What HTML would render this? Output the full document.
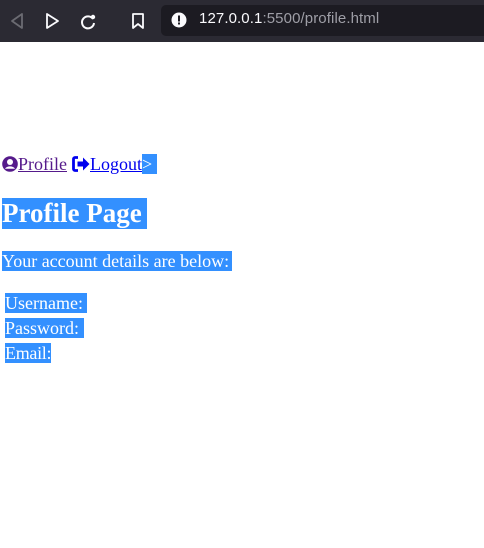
<!DOCTYPE html>
<html><head><meta charset="utf-8"><style>
html,body{margin:0;padding:0;background:#fff;width:484px;height:548px;overflow:hidden;position:relative;font-family:"Liberation Serif",serif}
.bar{position:absolute;left:0;top:0;width:484px;height:42px;background:#2b2a33}
.url{position:absolute;left:161px;top:5px;width:330px;height:31px;background:#1c1b22;border-radius:5px}
.urltxt{position:absolute;left:199px;top:10px;font:15px "Liberation Sans",sans-serif;color:#fbfbfe;letter-spacing:0.1px}
.urltxt span{color:#9e9ea6}
.sel{background:#3390ff;color:#fff}
.abs{position:absolute;white-space:nowrap}
a{color:#0000ee;text-decoration:underline}
</style></head><body>
<div class="bar"></div>
<svg class="abs" style="left:8px;top:11px" width="20" height="20" viewBox="0 0 20 20"><path d="M14 3v14L4 10z" fill="none" stroke="#6b6b72" stroke-width="1.8" stroke-linejoin="round"/></svg>
<svg class="abs" style="left:43px;top:11px" width="20" height="20" viewBox="0 0 20 20"><path d="M4 3v14L15 10z" fill="none" stroke="#fbfbfe" stroke-width="1.8" stroke-linejoin="round"/></svg>
<svg class="abs" style="left:78px;top:11px" width="20" height="20" viewBox="0 0 20 20"><path d="M15 8A6 6 0 1 0 16 12" fill="none" stroke="#fbfbfe" stroke-width="2"/><circle cx="15" cy="6" r="2.2" fill="#fbfbfe"/></svg>
<svg class="abs" style="left:128px;top:11px" width="20" height="20" viewBox="0 0 20 20"><path d="M5 3h10v14l-5-4-5 4z" fill="none" stroke="#fbfbfe" stroke-width="1.8" stroke-linejoin="round"/></svg>
<div class="url"></div>
<svg class="abs" style="left:171px;top:12px" width="16" height="16" viewBox="0 0 16 16"><circle cx="8" cy="8" r="7.5" fill="#fbfbfe"/><rect x="7" y="3.5" width="2" height="6" fill="#1c1b22"/><rect x="7" y="10.5" width="2" height="2" fill="#1c1b22"/></svg>
<div class="urltxt">127.0.0.1<span>:5500/profile.html</span></div>

<svg class="abs" style="left:2px;top:156px" width="16" height="16" viewBox="0 0 16 16"><circle cx="8" cy="8" r="7.8" fill="#551a8b"/><circle cx="8" cy="6" r="3" fill="#fff"/><path d="M3 12.8c1.5-3.3 8.5-3.3 10 0" fill="#fff"/></svg>
<div class="abs" style="left:18px;top:154px;font-size:18px;line-height:21px"><a style="color:#551a8b">Profile</a></div>
<svg class="abs" style="left:72px;top:156px" width="18" height="16" viewBox="0 0 18 16"><path d="M6 1.5H3a1.5 1.5 0 0 0-1.5 1.5v10A1.5 1.5 0 0 0 3 14.5h3" fill="none" stroke="#0000ee" stroke-width="2.8"/><path d="M5.5 5.5h5.5V1.5l6.5 6.5-6.5 6.5V10.5H5.5z" fill="#0000ee"/></svg>
<div class="abs" style="left:90px;top:154px;font-size:18px;line-height:21px"><a>Logout</a><span class="sel">&gt;&nbsp;</span></div>

<div class="abs sel" style="left:2px;top:198px;height:31px;width:145px;font-weight:bold;font-size:27px;line-height:31px">Profile Page</div>
<div class="abs sel" style="left:2px;top:251px;height:20px;width:230px;font-size:18px;line-height:20px">Your account details are below:</div>
<div class="abs sel" style="left:5px;top:293px;height:20px;width:82px;font-size:18px;line-height:20px">Username:</div>
<div class="abs sel" style="left:5px;top:318px;height:20px;width:79px;font-size:18px;line-height:20px">Password:</div>
<div class="abs sel" style="left:5px;top:343px;height:20px;font-size:18px;line-height:20px;letter-spacing:-0.3px">Email:</div>
</body></html>
